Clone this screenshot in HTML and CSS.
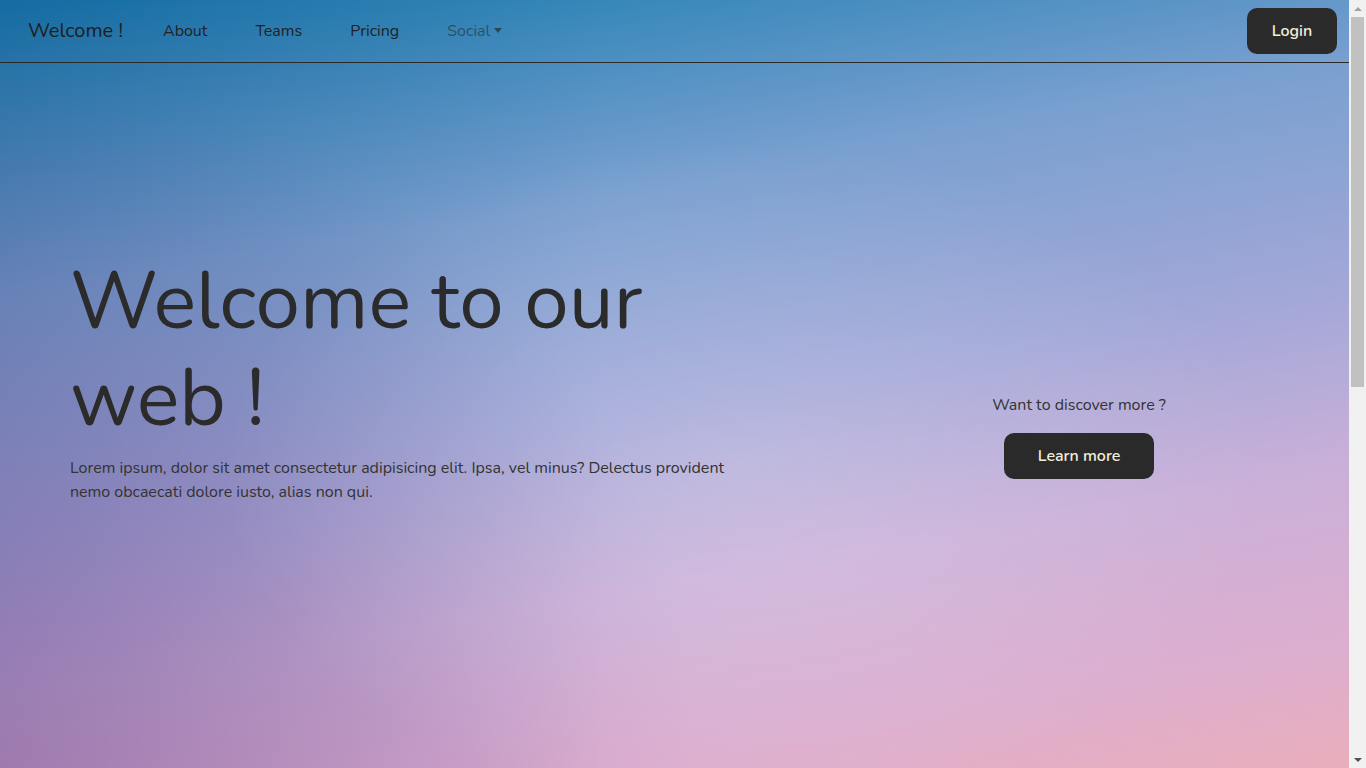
FILE: index.html
```html
<!DOCTYPE html>
<html lang="en">
<head>
<meta charset="utf-8">
<title>Welcome !</title>
<link rel="stylesheet" href="styles.css">
</head>
<body>
<div class="page">
  <header class="hero">
    <nav class="navbar">
      <a class="brand" href="#">Welcome !</a>
      <ul class="nav-links">
        <li><a class="nav-link" href="#about">About</a></li>
        <li><a class="nav-link" href="#teams">Teams</a></li>
        <li><a class="nav-link" href="#pricing">Pricing</a></li>
        <li><a class="nav-link dropdown" href="#">Social</a></li>
      </ul>
      <button class="btn btn-login">Login</button>
    </nav>
    <div class="hero-body">
      <div class="hero-main">
        <h1 class="hero-title">Welcome to our web !</h1>
        <p class="hero-text">Lorem ipsum, dolor sit amet consectetur adipisicing elit. Ipsa, vel minus? Delectus provident nemo obcaecati dolore iusto, alias non qui.</p>
      </div>
      <div class="hero-side">
        <p class="side-text">Want to discover more ?</p>
        <button class="btn btn-learn">Learn more</button>
      </div>
    </div>
  </header>
</div>
<div class="scrollbar" aria-hidden="true">
  <div class="sb-btn"><span class="sb-arrow up"></span></div>
  <div class="sb-track"><div class="sb-thumb"></div></div>
  <div class="sb-btn"><span class="sb-arrow down"></span></div>
</div>
</body>
</html>
```
FILE: styles.css
```css
* { box-sizing: border-box; }
html, body { margin: 0; padding: 0; height: 100%; }
body {
  font-family: "Nunito", "Lato", "Noto Sans", sans-serif;
  font-size: 16px;
  line-height: 24px;
  color: #333;
  background: #fff;
  display: flex;
  overflow: hidden;
}
.page {
  flex: 1;
  height: 100vh;
  overflow: hidden;
}
.hero {
  height: 768px;
  background:
    radial-gradient(ellipse at 55% 62%, rgba(255,255,255,0.18), rgba(255,255,255,0) 50%),
    radial-gradient(circle at 0% 100%, rgba(120,50,130,0.28), rgba(120,50,130,0) 45%),
    linear-gradient(to right, rgba(30,50,110,0.2) 0%, rgba(30,50,110,0) 45%),
    linear-gradient(170deg, #127aae 0%, #7aa0d0 30%, #a4a8d8 53%, #cab0d8 70%, #dcaed0 87%, #eaaebc 100%);
  display: flex;
  flex-direction: column;
}
.navbar {
  height: 63px;
  border-bottom: 1px solid #2a2a2a;
  display: flex;
  align-items: center;
  padding: 0 12px 0 28px;
}
.brand {
  font-size: 20px;
  color: #1e1e1e;
  text-decoration: none;
  margin-right: 16px;
}
.nav-links {
  list-style: none;
  display: flex;
  margin: 0;
  padding: 0;
  flex: 1;
}
.nav-link {
  display: block;
  padding: 0 24px;
  color: #222;
  text-decoration: none;
}
.nav-link.dropdown { color: rgba(30,30,30,0.55); }
.nav-link.dropdown::after {
  content: "";
  display: inline-block;
  margin-left: 4px;
  vertical-align: 3px;
  border-top: 5px solid rgba(30,30,30,0.6);
  border-left: 4.5px solid transparent;
  border-right: 4.5px solid transparent;
}
.btn {
  font-family: inherit;
  font-size: 16px;
  font-weight: 600;
  line-height: 24px;
  border: none;
  border-radius: 10px;
  background: #2a2a2a;
  color: #f2f0dc;
  cursor: pointer;
}
.btn-login {
  width: 90px;
  height: 46px;
  padding: 0;
}
.hero-body {
  display: flex;
  padding-top: 190px;
}
.hero-main {
  width: 809px;
  padding: 0 64px 0 70px;
}
.hero-title {
  font-size: 80px;
  line-height: 97px;
  font-weight: 400;
  color: #2b2b2b;
  margin: 0 0 9px 0;
}
.hero-text {
  margin: 0;
  color: #333;
}
.hero-side {
  flex: 1;
  text-align: center;
  padding-top: 140px;
}
.side-text {
  margin: 0 0 16px 0;
  color: #333;
}
.btn-learn {
  width: 150px;
  height: 46px;
  padding: 0;
}

/* classic scrollbar look */
.scrollbar {
  width: 17px;
  height: 100vh;
  flex: none;
  background: #f1f1f1;
  display: flex;
  flex-direction: column;
}
.sb-btn {
  height: 17px;
  flex: none;
  display: flex;
  align-items: center;
  justify-content: center;
}
.sb-arrow {
  width: 0;
  height: 0;
  border-left: 4px solid transparent;
  border-right: 4px solid transparent;
}
.sb-arrow.up { border-bottom: 4px solid #a3a3a3; }
.sb-arrow.down { border-top: 4px solid #505050; }
.sb-track {
  flex: 1;
  padding: 0 2px;
}
.sb-thumb {
  height: 370px;
  background: #c1c1c1;
}
```
